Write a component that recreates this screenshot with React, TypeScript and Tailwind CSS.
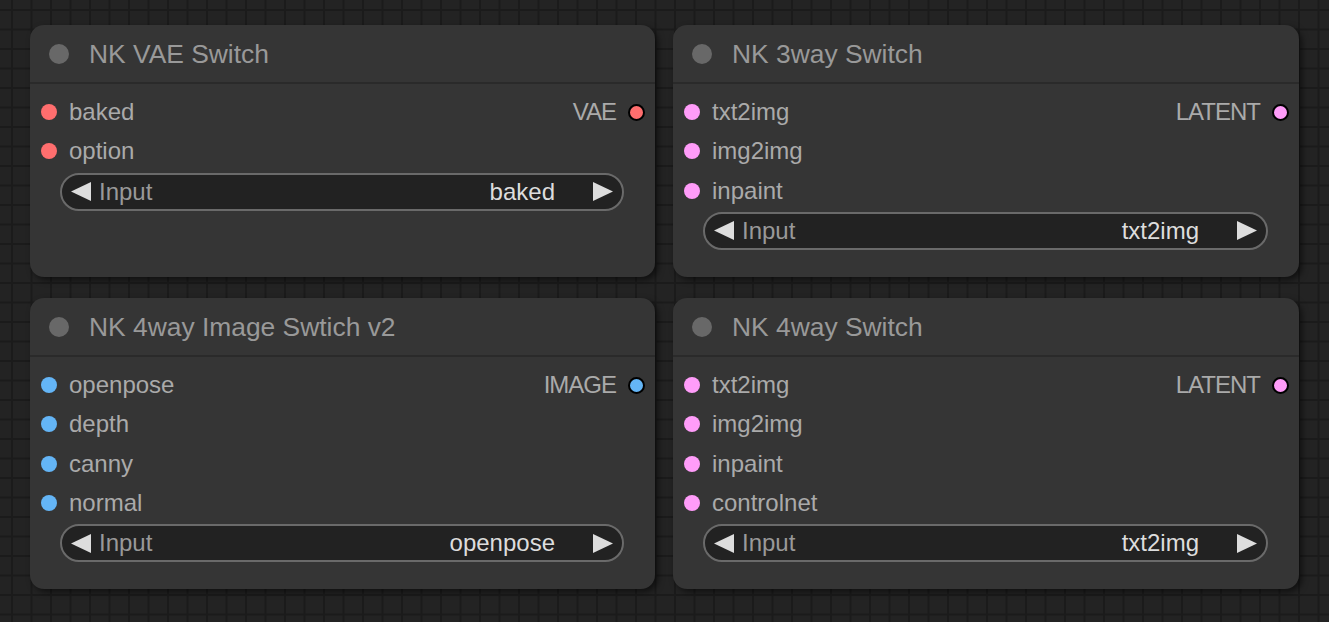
import React from 'react'

type Slot = { name: string; color: string }

type NodeProps = {
  title: string
  inputs: Slot[]
  output: Slot
  value: string
}

const RED = '#ff6e6e'
const PINK = '#ff9cf9'
const BLUE = '#64b5f6'

function Dot({ color, outlined }: { color: string; outlined?: boolean }) {
  return (
    <span
      className={
        outlined
          ? 'block h-[17px] w-[17px] shrink-0 rounded-full border-2 border-black'
          : 'block h-[16px] w-[16px] shrink-0 rounded-full'
      }
      style={{ backgroundColor: color }}
    />
  )
}

function Arrow({ dir }: { dir: 'left' | 'right' }) {
  return (
    <svg width="20" height="19" viewBox="0 0 20 19" className="shrink-0">
      {dir === 'left' ? (
        <polygon points="20,0 20,19 0,9.5" fill="#dddddd" />
      ) : (
        <polygon points="0,0 0,19 20,9.5" fill="#dddddd" />
      )}
    </svg>
  )
}

function Node({ title, inputs, output, value }: NodeProps) {
  return (
    <div className="flex flex-col rounded-[14px] bg-[#353535] shadow-[3px_3px_6px_rgba(0,0,0,0.55)]">
      <div className="flex h-[59px] items-center gap-[20px] border-b-2 border-[#2a2a2a] pl-[19px] pt-[1px]">
        <span className="block h-[20px] w-[20px] rounded-full bg-[#686868]" />
        <span className="text-[26.4px] leading-none text-[#999999]">{title}</span>
      </div>
      <div className="flex flex-col pt-[8.5px]">
        {inputs.map((slot, i) => (
          <div key={slot.name} className="flex h-[39.3px] items-center justify-between">
            <div className="flex items-center gap-[12px] pl-[11px]">
              <Dot color={slot.color} />
              <span className="text-[24px] leading-none text-[#aaaaaa]">{slot.name}</span>
            </div>
            {i === 0 && (
              <div className="flex items-center gap-[12px] pr-[10px]">
                <span className="text-[24px] leading-none tracking-[-1px] text-[#aaaaaa]">{output.name}</span>
                <Dot color={output.color} outlined />
              </div>
            )}
          </div>
        ))}
        <div className="ml-[30px] mr-[31px] mt-[1.5px] flex h-[38px] items-center rounded-full border-2 border-[#6a6a6a] bg-[#222222] pl-[9px] pr-[9px]">
          <Arrow dir="left" />
          <span className="ml-[8px] text-[24px] leading-none text-[#999999]">Input</span>
          <span className="ml-auto text-[24px] leading-none text-[#dddddd]">{value}</span>
          <span className="ml-[38px]">
            <Arrow dir="right" />
          </span>
        </div>
      </div>
    </div>
  )
}

export default function App() {
  return (
    <div
      className="grid h-[622px] w-[1329px] grid-cols-[625px_626px] grid-rows-[252px_291px] gap-x-[18px] gap-y-[21px] overflow-hidden bg-[#232323] bg-[linear-gradient(to_right,#1b1b1b_2px,transparent_2px),linear-gradient(to_bottom,#1b1b1b_2px,transparent_2px)] bg-[size:19.5px_19.5px] bg-[position:11px_9px] pl-[30px] pt-[25px] font-['Liberation_Sans',Arial,sans-serif]"
    >
      <Node
        title="NK VAE Switch"
        inputs={[
          { name: 'baked', color: RED },
          { name: 'option', color: RED },
        ]}
        output={{ name: 'VAE', color: RED }}
        value="baked"
      />
      <Node
        title="NK 3way Switch"
        inputs={[
          { name: 'txt2img', color: PINK },
          { name: 'img2img', color: PINK },
          { name: 'inpaint', color: PINK },
        ]}
        output={{ name: 'LATENT', color: PINK }}
        value="txt2img"
      />
      <Node
        title="NK 4way Image Swtich v2"
        inputs={[
          { name: 'openpose', color: BLUE },
          { name: 'depth', color: BLUE },
          { name: 'canny', color: BLUE },
          { name: 'normal', color: BLUE },
        ]}
        output={{ name: 'IMAGE', color: BLUE }}
        value="openpose"
      />
      <Node
        title="NK 4way Switch"
        inputs={[
          { name: 'txt2img', color: PINK },
          { name: 'img2img', color: PINK },
          { name: 'inpaint', color: PINK },
          { name: 'controlnet', color: PINK },
        ]}
        output={{ name: 'LATENT', color: PINK }}
        value="txt2img"
      />
    </div>
  )
}
